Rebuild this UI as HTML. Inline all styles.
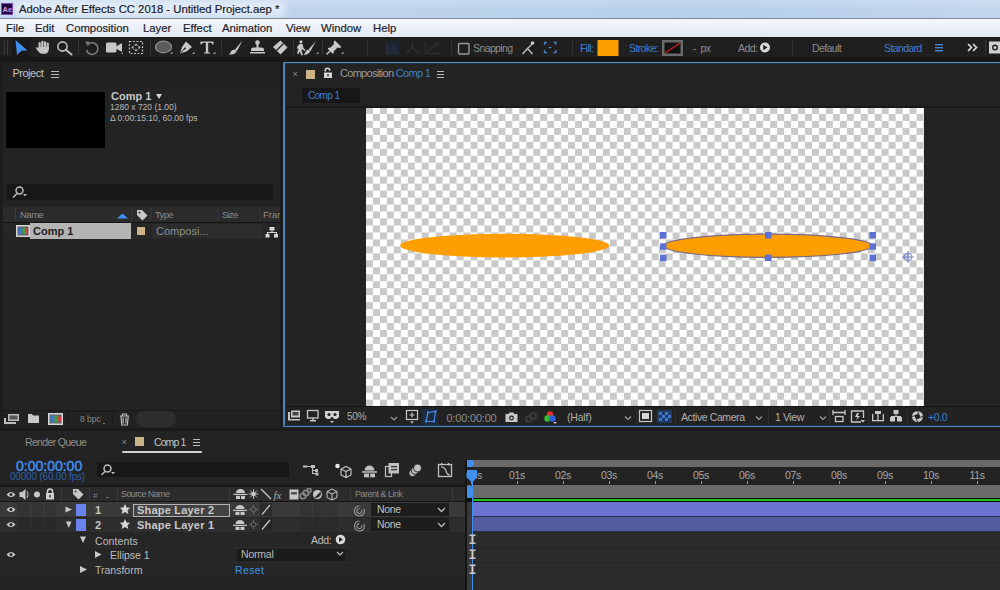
<!DOCTYPE html>
<html><head><meta charset="utf-8">
<style>
*{margin:0;padding:0;box-sizing:border-box}
html,body{width:1000px;height:590px;overflow:hidden;background:#232323;font-family:"Liberation Sans",sans-serif;position:relative}
.a{position:absolute}
.t{position:absolute;white-space:nowrap;line-height:1}
svg{position:absolute;overflow:visible}
.m{font-size:11.3px;color:#1e232b;top:22.5px;-webkit-text-stroke:0.2px #1e232b}
.tb{font-size:10.5px;top:42.5px;letter-spacing:-0.6px}
.sep{position:absolute;width:1px;background:#2e2e2e}
</style></head><body>
<!-- TITLE BAR -->
<div class="a" style="left:0;top:0;width:1000px;height:18px;background:linear-gradient(90deg,#c3d7ee 0%,#bcd3ec 50%,#b7cfea 70%,#c2d7ee 100%)"></div>
<div class="a" style="left:0;top:0;width:1000px;height:9px;background:linear-gradient(rgba(255,255,255,.18),rgba(255,255,255,0))"></div>
<div class="a" style="left:14px;top:1px;width:272px;height:16px;background:rgba(235,242,250,0.75);filter:blur(3px);border-radius:8px"></div>
<div class="a" style="left:1px;top:3px;width:12px;height:12px;background:#23063b;border:1px solid #7a4aba"></div>
<div class="t" style="left:2.5px;top:5.5px;font-size:7.5px;color:#c9a0f0;font-weight:bold">Ae</div>
<div class="t" style="left:19px;top:4px;font-size:11.3px;color:#1a2029;-webkit-text-stroke:0.2px #1a2029">Adobe After Effects CC 2018 - Untitled Project.aep *</div>
<!-- MENU -->
<div class="a" style="left:0;top:17.5px;width:1000px;height:1.2px;background:#7d8896"></div>
<div class="a" style="left:0;top:19px;width:1000px;height:18px;background:linear-gradient(#f5f7fb,#e9eef6 60%,#e3e8f1)"></div>
<div class="t m" style="left:6px">File</div>
<div class="t m" style="left:35px">Edit</div>
<div class="t m" style="left:66px">Composition</div>
<div class="t m" style="left:143px">Layer</div>
<div class="t m" style="left:183px">Effect</div>
<div class="t m" style="left:222px">Animation</div>
<div class="t m" style="left:286px">View</div>
<div class="t m" style="left:321px">Window</div>
<div class="t m" style="left:373px">Help</div>
<!-- TOOLBAR -->
<div class="a" style="left:0;top:37px;width:1000px;height:20px;background:#1f1f1f"></div>
<div class="a" style="left:0;top:57px;width:1000px;height:5px;background:#171717"></div>
<div class="a" style="left:4px;top:40px;width:1px;height:15px;background:#3a3a3a"></div>
<div class="a" style="left:7px;top:40px;width:1px;height:15px;background:#3a3a3a"></div>
<div class="a" style="left:12px;top:38px;width:18px;height:19px;background:#191919"></div>
<svg class="a" style="left:0;top:0" width="1000" height="590" viewBox="0 0 1000 590">
<g id="toolbar">
<!-- separators -->
<g fill="#333">
<rect x="78" y="40" width="1" height="15"/><rect x="150" y="40" width="1" height="15"/><rect x="221" y="40" width="1" height="15"/>
<rect x="293" y="40" width="1" height="15"/><rect x="322" y="40" width="1" height="15"/><rect x="367" y="40" width="1" height="15"/>
<rect x="451" y="40" width="1" height="15"/><rect x="572" y="40" width="1" height="15"/><rect x="792" y="40" width="1" height="15"/>
<rect x="985" y="40" width="1" height="15"/>
</g>
<!-- selection arrow -->
<path d="M15.5 40 L27.5 50.5 L21.5 50.8 L17 55 Z" fill="#3f8ff0"/>
<!-- hand -->
<g fill="#c4c4c4">
<rect x="38.5" y="42" width="2.2" height="7" rx="1.1"/><rect x="41.2" y="40.8" width="2.2" height="8" rx="1.1"/>
<rect x="43.9" y="41.2" width="2.2" height="8" rx="1.1"/><rect x="46.6" y="42.5" width="2.2" height="7" rx="1.1"/>
<path d="M38.5 47 L48.8 47 L48.8 50 Q48 53.5 45 53.8 L42 53.8 Q39.5 53.5 37.5 50.5 L35.6 47.8 Q36.2 46.8 37.4 47.6 L38.5 48.8Z"/>
</g>
<!-- zoom -->
<circle cx="62.5" cy="46.5" r="4.6" fill="none" stroke="#bdbdbd" stroke-width="1.6"/>
<path d="M65.8 49.8 L71.5 54.5" stroke="#bdbdbd" stroke-width="2" stroke-linecap="round"/>
<!-- rotate -->
<path d="M88 44.5 A5.8 5.8 0 1 1 86.5 50" fill="none" stroke="#7a7a7a" stroke-width="1.6"/>
<path d="M85 41.5 L89.5 41.8 L88 46.5Z" fill="#7a7a7a"/>
<!-- camera -->
<rect x="106" y="42.5" width="10.5" height="10" rx="1.5" fill="#c8c8c8"/>
<path d="M116 46.5 L122 43 L122 52 L116 48.5Z" fill="#c8c8c8"/>
<path d="M121 54 l2 0 l0 -2z" fill="#999"/>
<!-- pan behind -->
<g stroke="#c0c0c0" stroke-width="1.2" fill="none" stroke-dasharray="2 1.5">
<rect x="129.5" y="41.5" width="13" height="12"/>
</g>
<g fill="#c8c8c8"><path d="M136 43.5 l-2 2 h4z M136 51.5 l-2 -2 h4z M131.5 47.5 l2 -2 v4z M140.5 47.5 l-2 -2 v4z"/></g>
<!-- ellipse tool -->
<ellipse cx="163.5" cy="47" rx="8" ry="5.8" fill="#5a5a5a" stroke="#8c8c8c" stroke-width="1.2"/>
<path d="M170 54 l2.5 0 l0 -2.5z" fill="#999"/>
<!-- pen -->
<path d="M186 41.5 L192 47 L186.5 51.5 L180 53.5 L182 47 Z" fill="#c8c8c8"/>
<path d="M180.5 53 L184.5 48.5" stroke="#1f1f1f" stroke-width="1"/>
<circle cx="184.8" cy="48.5" r="1" fill="#1f1f1f"/>
<path d="M192 54 l2.5 0 l0 -2.5z" fill="#999"/>
<!-- T -->
<path d="M200.5 41.5 H213.5 V44.5 H212.5 Q212 42.8 210.5 42.8 H208.2 V52.5 H210 V53.5 H204 V52.5 H205.8 V42.8 H203.5 Q202 42.8 201.5 44.5 H200.5Z" fill="#c8c8c8"/>
<path d="M213 54 l2.5 0 l0 -2.5z" fill="#999"/>
<!-- brush -->
<path d="M242.5 40.5 L235 49.5 L237 51 Z" fill="#c8c8c8"/>
<path d="M234.5 49.5 Q231 50 230.5 52.5 Q230 54 228.5 54.5 Q233 55 235.5 53 Q237 51.5 236.5 51Z" fill="#c8c8c8"/>
<!-- stamp -->
<g fill="#c8c8c8">
<circle cx="257.5" cy="42.5" r="2.3"/><rect x="256.5" y="43" width="2" height="5"/>
<path d="M251 49.5 Q251 47.5 253.5 47.5 H261.5 Q264 47.5 264 49.5 V51 H251Z"/>
<rect x="250" y="52" width="15" height="1.5"/>
</g>
<!-- eraser -->
<path d="M280.5 40.5 L287.5 47.5 L280.5 54.5 L273 47Z" fill="#c8c8c8"/>
<path d="M276.5 50.5 L283.5 43.5" stroke="#1f1f1f" stroke-width="1.2"/>
<!-- roto brush -->
<g fill="#c8c8c8">
<circle cx="301" cy="41.8" r="1.6"/>
<path d="M299.5 44 L302.5 44 L303.5 48 L305.5 50 L304.5 51 L302 49 L301.5 51 L303 55 L301.5 55.5 L299.5 51.5 L298.5 54 L297 53.5 L298.5 48.5 L297.5 49 L297 47Z"/>
<path d="M316 41 L308.5 49.5 L310.5 51Z"/>
<path d="M308 49.5 Q305.5 50.5 305 53 Q304.5 54.5 303.5 55 Q307 55 309 53 Q310.5 51.5 310 51Z"/>
</g>
<path d="M316 54 l2.5 0 l0 -2.5z" fill="#999"/>
<!-- puppet pin -->
<g fill="#c8c8c8">
<path d="M335 40.5 L341.5 47 L339.5 48 L337.5 47.5 L334 51 L333.5 53.5 L332.5 53.5 L328 49 L328 48 L330.5 47.5 L334 44 L333.5 42Z"/>
<path d="M330.5 50.5 L326.5 54.5" stroke="#c8c8c8" stroke-width="1.4"/>
</g>
<path d="M341 54 l2.5 0 l0 -2.5z" fill="#999"/>
<!-- dim align icons -->
<rect x="385" y="41" width="15" height="14" fill="#1c2330"/>
<g stroke="#2c3646" stroke-width="1.2" fill="none">
<path d="M387 43 V53 H398 M390 45 V51 M393 45 V51 M396 45 V51"/>
</g>
<g stroke="#303030" stroke-width="1.2" fill="none">
<path d="M412.5 42 V47 L406.5 53.5 M412.5 47 L418.5 53.5 M406.5 53.5 H408 M417 53.5 H418.5"/>
<path d="M425.5 42 V53.5 H440 M427 52 L438 43 M434 43 H438 V47"/>
</g>
<!-- snapping checkbox -->
<rect x="458.5" y="43.5" width="10.5" height="10.5" rx="1" fill="none" stroke="#9a9a9a" stroke-width="1.4"/>
<!-- snapping icon -->
<path d="M522.5 54 L527.5 48.5 L532.5 54" fill="none" stroke="#bdbdbd" stroke-width="1.5"/>
<path d="M527 49 L532 44" stroke="#bdbdbd" stroke-width="1.2"/>
<circle cx="532.5" cy="43" r="1.8" fill="#d0d0d0"/>
<!-- blue dashed box -->
<g fill="none" stroke="#4a7fc0" stroke-width="1.3">
<path d="M544.5 45 V42.5 H547 M553.5 42.5 H556 V45 M556 50 V52.5 H553.5 M547 52.5 H544.5 V50"/>
<path d="M548.5 47.5 h3" />
</g>
<!-- fill swatch -->
<rect x="597.5" y="40" width="21" height="16" fill="#ff9e00"/>
<!-- stroke swatch -->
<rect x="662" y="40" width="21" height="16" fill="#6a6a6a"/>
<rect x="664.5" y="42.5" width="16" height="11" fill="#111"/>
<path d="M665 53 L680 43" stroke="#d02020" stroke-width="1.3"/>
<!-- add circle -->
<circle cx="765" cy="47.5" r="5" fill="#d8d8d8"/>
<path d="M763.2 44.8 L767.5 47.5 L763.2 50.2Z" fill="#1f1f1f"/>
<!-- hamburger blue -->
<g fill="#4a86d0"><rect x="935" y="44" width="8" height="1.4"/><rect x="935" y="47" width="8" height="1.4"/><rect x="935" y="50" width="8" height="1.4"/></g>
<!-- >> -->
<path d="M968 44 L971.5 47.5 L968 51 M973 44 L976.5 47.5 L973 51" fill="none" stroke="#e0e0e0" stroke-width="1.6"/>
<!-- right icon -->
<rect x="989" y="41.5" width="12" height="12" fill="#cfcfcf"/>
<circle cx="995" cy="47.5" r="3" fill="#1f1f1f"/><circle cx="995" cy="47.5" r="1.6" fill="#cfcfcf"/>
</g>
</svg>
<div class="t tb" style="left:473px;color:#8c8c8c">Snapping</div>
<div class="t tb" style="left:580px;color:#3f7fcf">Fill:</div>
<div class="t tb" style="left:629px;color:#3f7fcf">Stroke:</div>
<div class="t tb" style="left:693px;color:#8c8c8c">-&nbsp;&nbsp;px</div>
<div class="t tb" style="left:738px;color:#8c8c8c">Add:</div>
<div class="t tb" style="left:812px;color:#8c8c8c">Default</div>
<div class="t tb" style="left:884px;color:#3f7fcf">Standard</div>


<!-- PROJECT PANEL -->
<div class="a" style="left:0;top:62px;width:280px;height:366px;background:#232323"></div>
<div class="a" style="left:0;top:62px;width:3px;height:366px;background:#1d1d1d"></div>
<div class="a" style="left:3px;top:62px;width:277px;height:26px;background:#222"></div>
<div class="t" style="left:12.5px;top:68px;font-size:11px;color:#c4c4c4;letter-spacing:-0.5px">Project</div>
<div class="a" style="left:51px;top:71px;width:8px;height:1.3px;background:#bbb"></div>
<div class="a" style="left:51px;top:74px;width:8px;height:1.3px;background:#bbb"></div>
<div class="a" style="left:51px;top:77px;width:8px;height:1.3px;background:#bbb"></div>
<div class="a" style="left:6px;top:92px;width:99px;height:56px;background:#000"></div>
<div class="t" style="left:111px;top:91px;font-size:11px;color:#c8c8c8;font-weight:bold">Comp 1</div>
<div class="a" style="left:156px;top:94px;width:0;height:0;border-left:3.5px solid transparent;border-right:3.5px solid transparent;border-top:5px solid #d8d8d8"></div>
<div class="t" style="left:110px;top:103px;font-size:8.5px;color:#b8b8b8">1280 x 720 (1.00)</div>
<div class="t" style="left:110px;top:114px;font-size:8.5px;color:#b8b8b8">Δ 0:00:15:10, 60.00 fps</div>
<!-- search -->
<div class="a" style="left:7px;top:184px;width:266px;height:16px;background:#181818"></div>
<!-- header -->
<div class="a" style="left:3px;top:207px;width:277px;height:15px;background:#2b2b2b"></div>
<div class="a" style="left:3px;top:222px;width:277px;height:1px;background:#141414"></div>
<div class="t" style="left:20px;top:209.5px;font-size:9.5px;color:#8a8a8a;letter-spacing:-0.5px">Name</div>
<div class="t" style="left:155px;top:209.5px;font-size:9.5px;color:#8a8a8a;letter-spacing:-0.7px">Type</div>
<div class="t" style="left:222px;top:209.5px;font-size:9.5px;color:#8a8a8a;letter-spacing:-0.7px">Size</div>
<div class="t" style="left:263px;top:209.5px;font-size:9.5px;color:#8a8a8a">Fran</div>
<!-- row -->
<div class="a" style="left:3px;top:223px;width:277px;height:16px;background:#262626"></div>
<div class="a" style="left:30px;top:223px;width:101px;height:16px;background:#b4b4b4"></div>
<div class="a" style="left:152px;top:224px;width:111px;height:14px;background:#2c2c2c"></div>
<div class="t" style="left:33px;top:226px;font-size:11px;color:#1e1e1e;font-weight:bold">Comp 1</div>
<div class="t" style="left:156px;top:226px;font-size:11px;color:#8c8c8c">Composi...</div>
<div class="a" style="left:137px;top:227px;width:8px;height:8px;background:#c9b387"></div>
<!-- bottom bar -->
<div class="a" style="left:3px;top:410px;width:277px;height:18px;background:#222"></div>
<div class="a" style="left:3px;top:410px;width:277px;height:1px;background:#1a1a1a"></div>
<div class="t" style="left:80px;top:415px;font-size:8.5px;color:#8a8a8a">8 bpc</div>
<div class="a" style="left:136px;top:411px;width:40px;height:16px;border-radius:8px;background:#2e2e2e"></div>
<!-- COMP PANEL -->
<div class="a" style="left:280px;top:62px;width:3px;height:369px;background:#1a1a1a"></div>
<div class="a" style="left:283px;top:62px;width:717px;height:366px;background:#232323"></div>
<div class="t" style="left:292.5px;top:70px;font-size:9px;color:#8a8a8a">×</div>
<div class="a" style="left:306px;top:69.5px;width:9px;height:9px;background:#c9b387"></div>
<div class="t" style="left:340px;top:68px;font-size:11px;color:#9a9a9a;letter-spacing:-0.7px">Composition <span style="color:#3f7fcf">Comp 1</span></div>
<div class="a" style="left:437px;top:71px;width:7px;height:1.3px;background:#bbb"></div>
<div class="a" style="left:437px;top:74px;width:7px;height:1.3px;background:#bbb"></div>
<div class="a" style="left:437px;top:77px;width:7px;height:1.3px;background:#bbb"></div>
<div class="a" style="left:302px;top:88px;width:58px;height:15px;background:#171717"></div>
<div class="t" style="left:308px;top:90.5px;font-size:10px;color:#3f7fcf;letter-spacing:-0.6px">Comp 1</div>
<div class="a" style="left:285px;top:106px;width:715px;height:2px;background:#181818"></div>
<div class="a" style="left:285px;top:108px;width:715px;height:298px;background:#232323"></div>
<div class="a" style="left:366px;top:108px;width:558px;height:298px;background:conic-gradient(#fff 25%,#c9c9c9 0 50%,#fff 0 75%,#c9c9c9 0) 0 -1px/13.95px 13.95px"></div>
<div class="a" style="left:285px;top:406px;width:715px;height:1px;background:#141414"></div>
<div class="a" style="left:285px;top:407px;width:715px;height:19px;background:#222"></div>
<div class="t" style="left:347px;top:412px;font-size:10px;color:#b0b0b0;letter-spacing:-0.3px">50%</div>
<div class="t" style="left:446.5px;top:413px;font-size:11px;color:#8c8c8c;letter-spacing:-0.2px">0:00:00:00</div>
<div class="t" style="left:567px;top:411.5px;font-size:10.5px;color:#b0b0b0;letter-spacing:-0.2px">(Half)</div>
<div class="t" style="left:681px;top:411.5px;font-size:10.5px;color:#b0b0b0;letter-spacing:-0.4px">Active Camera</div>
<div class="t" style="left:775px;top:411.5px;font-size:10.5px;color:#b0b0b0;letter-spacing:-0.4px">1 View</div>
<div class="t" style="left:928px;top:411.5px;font-size:10.5px;color:#3f7fcf;letter-spacing:-0.4px">+0.0</div>

<div class="a" style="left:283px;top:61.5px;width:717px;height:1.5px;background:#5f8cbc"></div>
<div class="a" style="left:284px;top:63px;width:716px;height:1px;background:#1b3550"></div>
<div class="a" style="left:283px;top:62px;width:1.5px;height:365px;background:#5082b4"></div>
<div class="a" style="left:284.5px;top:63px;width:1px;height:363px;background:#1b3550"></div>
<div class="a" style="left:283px;top:425.5px;width:717px;height:1.5px;background:#4f84ba"></div>
<div class="a" style="left:284px;top:424.5px;width:716px;height:1px;background:#1b3550"></div>
<!-- TIMELINE -->
<div class="a" style="left:0;top:428px;width:1000px;height:3px;background:#1a1a1a"></div>
<div class="a" style="left:0;top:431px;width:1000px;height:159px;background:#232323"></div>
<div class="t" style="left:25px;top:437px;font-size:10.5px;color:#8f8f8f;letter-spacing:-0.65px">Render Queue</div>
<div class="t" style="left:121.5px;top:438px;font-size:9px;color:#8a8a8a">×</div>
<div class="a" style="left:135px;top:437px;width:9px;height:9px;background:#c9b387"></div>
<div class="t" style="left:154px;top:437px;font-size:10.5px;color:#c4c4c4;letter-spacing:-0.9px">Comp 1</div>
<div class="a" style="left:193px;top:439px;width:7px;height:1.3px;background:#bbb"></div>
<div class="a" style="left:193px;top:442px;width:7px;height:1.3px;background:#bbb"></div>
<div class="a" style="left:193px;top:445px;width:7px;height:1.3px;background:#bbb"></div>
<div class="a" style="left:122px;top:451px;width:80px;height:2px;background:#d0d0d0;border-radius:1px"></div>
<div class="t" style="left:16px;top:459px;font-size:14px;color:#3f8ff0;letter-spacing:0px;-webkit-text-stroke:0.45px #3f8ff0">0:00:00:00</div>
<div class="t" style="left:10px;top:472px;font-size:10px;color:#2a5fa8;letter-spacing:-0.2px">00000 (60.00 fps)</div>
<div class="a" style="left:97px;top:462px;width:192px;height:15px;background:#171717"></div>
<!-- header row -->
<div class="a" style="left:0;top:485px;width:466px;height:1.5px;background:#181818"></div><div class="a" style="left:0;top:486.5px;width:466px;height:14.5px;background:#2b2b2b"></div>
<div class="a" style="left:0;top:501px;width:466px;height:1px;background:#151515"></div>
<div class="t" style="left:121px;top:489.5px;font-size:9px;color:#8a8a8a;letter-spacing:-0.6px">Source Name</div>
<div class="t" style="left:355px;top:489.5px;font-size:9px;color:#8a8a8a;letter-spacing:-0.5px">Parent &amp; Link</div>
<!-- rows -->
<div class="a" style="left:0;top:502px;width:466px;height:15px;background:#3a3a3a"></div>
<div class="a" style="left:0;top:517px;width:466px;height:15px;background:#2e2e2e"></div>
<div class="a" style="left:0;top:516.5px;width:466px;height:1px;background:#262626"></div>
<div class="a" style="left:0;top:532px;width:466px;height:45px;background:#262626"></div>
<div class="a" style="left:0;top:546.5px;width:466px;height:1px;background:#2b2b2b"></div>
<div class="a" style="left:0;top:561.5px;width:466px;height:1px;background:#2b2b2b"></div>
<div class="a" style="left:0;top:577px;width:466px;height:13px;background:#232323"></div>
<div class="a" style="left:133px;top:503.5px;width:97px;height:13px;border:1.5px solid #b4b4b4;background:#434343"></div>
<div class="t" style="left:95px;top:505px;font-size:11px;color:#c8c8c8;font-weight:bold">1</div>
<div class="t" style="left:95px;top:520px;font-size:11px;color:#c8c8c8;font-weight:bold">2</div>
<div class="t" style="left:137px;top:504.8px;font-size:11px;color:#c8c8c8;font-weight:bold;letter-spacing:0.2px">Shape Layer 2</div>
<div class="t" style="left:137px;top:520.2px;font-size:11px;color:#c8c8c8;font-weight:bold;letter-spacing:0.2px">Shape Layer 1</div>
<div class="t" style="left:95px;top:535.5px;font-size:10.5px;color:#bcbcbc;letter-spacing:0.1px">Contents</div>
<div class="t" style="left:110px;top:550px;font-size:10.5px;color:#bcbcbc;letter-spacing:0px">Ellipse 1</div>
<div class="t" style="left:95px;top:564.5px;font-size:10.5px;color:#bcbcbc;letter-spacing:0px">Transform</div>
<div class="t" style="left:311px;top:535px;font-size:10.5px;color:#bcbcbc;letter-spacing:-0.3px">Add:</div>
<div class="a" style="left:237px;top:548.5px;width:108px;height:12px;background:#1b1b1b"></div>
<div class="t" style="left:241px;top:548.5px;font-size:10.5px;color:#bcbcbc;letter-spacing:-0.2px">Normal</div>
<div class="t" style="left:235px;top:564.5px;font-size:10.5px;color:#3f8ff0;letter-spacing:0.4px">Reset</div>
<div class="a" style="left:371px;top:503px;width:78px;height:13px;background:#1d1d1d"></div>
<div class="a" style="left:371px;top:518px;width:78px;height:13px;background:#1d1d1d"></div>
<div class="t" style="left:377px;top:504px;font-size:10.5px;color:#c0c0c0;letter-spacing:-0.3px">None</div>
<div class="t" style="left:377px;top:519px;font-size:10.5px;color:#c0c0c0;letter-spacing:-0.3px">None</div>
<!-- timeline right -->
<div class="a" style="left:465px;top:460px;width:2px;height:130px;background:#141414"></div>
<div class="a" style="left:467px;top:460px;width:533px;height:130px;background:#262626"></div>
<div class="a" style="left:467px;top:460px;width:533px;height:7px;background:#6a6a6a"></div>
<div class="a" style="left:467px;top:467px;width:533px;height:18px;background:#232323"></div>
<div class="a" style="left:467px;top:485px;width:533px;height:13px;background:#6b6b6b"></div>
<div class="a" style="left:467px;top:498px;width:533px;height:4px;background:#0c0c0c"></div>
<div class="a" style="left:472px;top:499px;width:528px;height:2px;background:#20c020"></div>
<div class="a" style="left:472px;top:502px;width:528px;height:15px;background:#6c74d2"></div>
<div class="a" style="left:472px;top:517px;width:528px;height:15px;background:#535c9c"></div>
<div class="a" style="left:472px;top:516px;width:528px;height:1px;background:#2a2e50"></div>
<div class="a" style="left:472px;top:531px;width:528px;height:1px;background:#2a2e50"></div>
<div class="a" style="left:467px;top:532px;width:533px;height:45px;background:#2b2b2b"></div>
<div class="a" style="left:467px;top:546.5px;width:533px;height:1px;background:#242424"></div>
<div class="a" style="left:467px;top:561.5px;width:533px;height:1px;background:#242424"></div>
<div class="a" style="left:467px;top:576.5px;width:533px;height:1px;background:#242424"></div>
<div class="a" style="left:467px;top:577px;width:533px;height:13px;background:#2b2b2b"></div>
<div class="a" style="left:467px;top:502px;width:5px;height:88px;background:#393939"></div>
<div class="t" style="left:466px;top:470px;font-size:10.5px;color:#a8a8a8;letter-spacing:-0.3px">00s</div>
<div class="a" style="left:471px;top:481px;width:1px;height:3px;background:#999"></div>
<div class="t" style="left:502px;width:30px;text-align:center;top:470px;font-size:10.5px;color:#a8a8a8;letter-spacing:-0.3px">01s</div>
<div class="a" style="left:517px;top:481px;width:1px;height:3px;background:#999"></div>
<div class="t" style="left:548px;width:30px;text-align:center;top:470px;font-size:10.5px;color:#a8a8a8;letter-spacing:-0.3px">02s</div>
<div class="a" style="left:563px;top:481px;width:1px;height:3px;background:#999"></div>
<div class="t" style="left:594px;width:30px;text-align:center;top:470px;font-size:10.5px;color:#a8a8a8;letter-spacing:-0.3px">03s</div>
<div class="a" style="left:609px;top:481px;width:1px;height:3px;background:#999"></div>
<div class="t" style="left:640px;width:30px;text-align:center;top:470px;font-size:10.5px;color:#a8a8a8;letter-spacing:-0.3px">04s</div>
<div class="a" style="left:655px;top:481px;width:1px;height:3px;background:#999"></div>
<div class="t" style="left:686px;width:30px;text-align:center;top:470px;font-size:10.5px;color:#a8a8a8;letter-spacing:-0.3px">05s</div>
<div class="a" style="left:701px;top:481px;width:1px;height:3px;background:#999"></div>
<div class="t" style="left:732px;width:30px;text-align:center;top:470px;font-size:10.5px;color:#a8a8a8;letter-spacing:-0.3px">06s</div>
<div class="a" style="left:747px;top:481px;width:1px;height:3px;background:#999"></div>
<div class="t" style="left:778px;width:30px;text-align:center;top:470px;font-size:10.5px;color:#a8a8a8;letter-spacing:-0.3px">07s</div>
<div class="a" style="left:793px;top:481px;width:1px;height:3px;background:#999"></div>
<div class="t" style="left:824px;width:30px;text-align:center;top:470px;font-size:10.5px;color:#a8a8a8;letter-spacing:-0.3px">08s</div>
<div class="a" style="left:839px;top:481px;width:1px;height:3px;background:#999"></div>
<div class="t" style="left:870px;width:30px;text-align:center;top:470px;font-size:10.5px;color:#a8a8a8;letter-spacing:-0.3px">09s</div>
<div class="a" style="left:885px;top:481px;width:1px;height:3px;background:#999"></div>
<div class="t" style="left:916px;width:30px;text-align:center;top:470px;font-size:10.5px;color:#a8a8a8;letter-spacing:-0.3px">10s</div>
<div class="a" style="left:931px;top:481px;width:1px;height:3px;background:#999"></div>
<div class="t" style="left:962px;width:30px;text-align:center;top:470px;font-size:10.5px;color:#a8a8a8;letter-spacing:-0.3px">11s</div>
<div class="a" style="left:977px;top:481px;width:1px;height:3px;background:#999"></div>
<div class="a" style="left:471.5px;top:470px;width:1.5px;height:120px;background:#3f8ff0"></div>
<svg class="a" style="left:0;top:0" width="1000" height="590" viewBox="0 0 1000 590">
<!-- ===== project panel ===== -->
<g fill="none" stroke="#bdbdbd" stroke-width="1.5"><circle cx="19.5" cy="190.5" r="3.5"/><path d="M17 193.5 L13 197.5"/></g>
<path d="M23 194 h4 l-2 2.2z" fill="#bdbdbd"/>
<g fill="#3a3a3a"><rect x="15" y="208" width="1" height="13"/><rect x="131.5" y="208" width="1" height="13"/><rect x="150.5" y="208" width="1" height="13"/><rect x="217.5" y="208" width="1" height="13"/><rect x="259.5" y="208" width="1" height="13"/></g>
<path d="M117 218.5 L122.5 213.5 L128 218.5Z" fill="#3f8ff0"/>
<path d="M137 210 H142 L147.5 215.5 L142.5 220.5 L137 215Z" fill="#c8c8c8"/><circle cx="139.5" cy="212.5" r="1" fill="#2b2b2b"/>
<!-- comp icon in row -->
<rect x="16" y="225" width="14" height="12" fill="#d8d8d8"/>
<rect x="17.5" y="226.5" width="11" height="9" fill="#6a5a60"/>
<rect x="18.5" y="227.5" width="4" height="7" fill="#3a7ad0"/><rect x="22.5" y="227.5" width="3.5" height="7" fill="#40a040"/><rect x="25.5" y="228.5" width="2.5" height="5" fill="#d04040"/>
<!-- network icon -->
<g fill="#d8d8d8"><rect x="269.5" y="227" width="5" height="3.5"/><rect x="271.5" y="230" width="1" height="2.5"/><rect x="267" y="232" width="10" height="1"/><rect x="267" y="232" width="1" height="2"/><rect x="276" y="232" width="1" height="2"/><rect x="265.5" y="234" width="4" height="3.5"/><rect x="274" y="234" width="4" height="3.5"/></g>
<!-- project bottom icons -->
<g fill="#bcbcbc">
<rect x="8" y="414" width="11" height="7"/><rect x="4" y="418" width="2" height="6"/><rect x="4" y="422" width="12" height="2"/>
</g>
<rect x="9.5" y="415.5" width="8" height="4" fill="#555"/>
<path d="M28 414 h4 l1 1.5 h6 v7.5 h-11z" fill="#c8c8c8"/>
<rect x="48" y="413" width="15" height="12" fill="#d8d8d8"/><rect x="49.5" y="414.5" width="12" height="9" fill="#6a5a60"/>
<rect x="50.5" y="415.5" width="4" height="7" fill="#3a7ad0"/><rect x="54.5" y="415.5" width="4" height="7" fill="#40a040"/><rect x="58" y="416.5" width="3" height="5" fill="#d04040"/>
<rect x="68.5" y="411.5" width="44" height="15" fill="none" stroke="#1a1a1a" stroke-width="1"/>
<path d="M103 423 h2 v1 h-2z" fill="#777"/>
<g fill="none" stroke="#bcbcbc" stroke-width="1.2"><path d="M120 416 h9 M121 416 l0.8 9 h5.6 l0.8 -9 M123.2 417.5 v6 M126 417.5 v6"/><path d="M122.5 416 v-2 h4 v2"/></g>

<!-- ===== comp panel header ===== -->
<g fill="#d8d8d8"><path d="M324.5 71.5 v-1 a3 3 0 0 1 6 0 v0.3 h-1.6 v-0.3 a1.4 1.4 0 0 0 -2.8 0 v1z"/><rect x="324" y="72.5" width="8" height="5.5"/></g>
<rect x="327.3" y="74.2" width="1.4" height="2" fill="#232323"/>
<!-- ===== canvas ===== -->
<ellipse cx="504.7" cy="245.6" rx="104.5" ry="11.8" fill="#ff9e00"/>
<ellipse cx="768" cy="245.8" rx="104" ry="11.6" fill="#ff9e00" stroke="#7a6a88" stroke-width="1.2"/>
<g fill="#5d70d6">
<rect x="660" y="232" width="6.5" height="6.5"/><rect x="765" y="232" width="6.5" height="6.5"/><rect x="869.5" y="232" width="6.5" height="6.5"/>
<rect x="660" y="243.3" width="6.5" height="6.5"/><rect x="869.5" y="243.3" width="6.5" height="6.5"/>
<rect x="660" y="254.6" width="6.5" height="6.5"/><rect x="765" y="254.6" width="6.5" height="6.5"/><rect x="869.5" y="254.6" width="6.5" height="6.5"/>
</g>
<g fill="none" stroke="#7b86c8" stroke-width="1.1"><circle cx="908" cy="257" r="3.8"/><path d="M902 257 h12 M908 251 v12"/></g>
<!-- ===== comp bottom bar ===== -->
<g fill="#c8c8c8">
<rect x="291" y="410.5" width="9" height="7"/><rect x="288" y="412" width="2" height="8"/><rect x="288" y="419" width="12" height="1.5"/>
</g>
<rect x="292.5" y="412" width="6" height="3.5" fill="#444"/>
<g fill="none" stroke="#c8c8c8" stroke-width="1.3"><rect x="307.5" y="410.5" width="10.5" height="7.5"/></g>
<rect x="310" y="420" width="6" height="1.5" fill="#c8c8c8"/><rect x="312.3" y="418" width="1.4" height="2.5" fill="#c8c8c8"/>
<path d="M325 411 h14 v6 q-1 2 -3 2 h-2 l-1.5 -2 h-1 l-1.5 2 h-2 q-2 0 -3 -2z" fill="#d0d0d0"/>
<circle cx="329" cy="414.5" r="1.6" fill="#222"/><circle cx="335" cy="414.5" r="1.6" fill="#222"/>
<path d="M330 421 h4 l-2 2z" fill="#d0d0d0"/>
<path d="M391 417 l3 3 l3 -3" fill="none" stroke="#9a9a9a" stroke-width="1.2"/>

<g fill="none" stroke="#c8c8c8" stroke-width="1.2"><rect x="406.5" y="410.5" width="11" height="9"/><path d="M412 412.5 v5 M409.5 415 h5"/></g>
<path d="M410 421.5 h4 l-2 2z" fill="#c8c8c8"/>
<rect x="422" y="409" width="16" height="16" fill="#1b2a3e"/>
<path d="M426 421.5 L428 412.5 L435.5 411.5 L434 421.5 Z" fill="none" stroke="#4a8ae0" stroke-width="1.2"/>
<g fill="#4a8ae0"><rect x="425" y="420.5" width="2" height="2"/><rect x="427" y="411.5" width="2" height="2"/><rect x="434.5" y="410.5" width="2" height="2"/><rect x="433" y="420.5" width="2" height="2"/></g>
<g fill="#c8c8c8"><path d="M505.5 414 h3 l1 -1.5 h4 l1 1.5 h3 v8 h-12z"/></g>
<circle cx="511.5" cy="418" r="2.4" fill="#222"/><circle cx="511.5" cy="418" r="1.2" fill="#c8c8c8"/>
<g fill="none" stroke="#3a3a3a" stroke-width="2"><circle cx="529" cy="419" r="3"/><circle cx="533" cy="416" r="3"/></g>
<circle cx="550" cy="414.5" r="3.2" fill="#e03030"/><circle cx="547.5" cy="418.5" r="3.2" fill="#30c030"/><circle cx="552.5" cy="418.5" r="3.2" fill="#3060e0"/>
<path d="M553 422 h4 l-2 2z" fill="#c8c8c8"/>
<path d="M625 416.5 l3 3 l3 -3" fill="none" stroke="#9a9a9a" stroke-width="1.2"/>
<rect x="636" y="409" width="1" height="16" fill="#2e2e2e"/>
<rect x="639.5" y="410.5" width="12" height="11" fill="none" stroke="#c8c8c8" stroke-width="1.2"/>
<rect x="642" y="413" width="7" height="6" fill="#d8d8d8"/>
<rect x="657" y="410" width="15" height="13" fill="#1d3a66"/>
<g fill="#3f78c8"><rect x="659" y="412" width="3" height="3"/><rect x="665" y="412" width="3" height="3"/><rect x="662" y="415" width="3" height="3"/><rect x="668" y="415" width="3" height="3"/><rect x="659" y="418" width="3" height="3"/><rect x="665" y="418" width="3" height="3"/></g>
<rect x="675" y="409" width="1" height="16" fill="#2e2e2e"/>
<path d="M756 416.5 l3 3 l3 -3" fill="none" stroke="#9a9a9a" stroke-width="1.2"/>
<rect x="768" y="409" width="1" height="16" fill="#2e2e2e"/>
<path d="M820 416.5 l3 3 l3 -3" fill="none" stroke="#9a9a9a" stroke-width="1.2"/>
<rect x="829" y="409" width="1" height="16" fill="#2e2e2e"/>
<g fill="none" stroke="#c8c8c8" stroke-width="1.3"><path d="M833 412.5 h12 M833 410 v5 M845 410 v5"/><rect x="835.5" y="416.5" width="7.5" height="5"/></g>
<g fill="none" stroke="#c8c8c8" stroke-width="1.3"><path d="M861 422 h-9.5 v-11 h12 v7"/></g>
<path d="M857 413 l-2 4 h2.5 l-1.5 3.5 l4 -4.5 h-2.5 l1.5 -3z" fill="#d0d0d0"/>
<path d="M860.5 420 h4.5 l-2.2 2.5z" fill="#c8c8c8"/>
<rect x="868" y="409" width="1" height="16" fill="#2e2e2e"/>
<g fill="#c8c8c8"><rect x="872" y="420" width="12" height="1.3"/><rect x="872" y="414" width="1.3" height="6"/><rect x="877.3" y="412" width="1.3" height="8"/><rect x="882.7" y="414" width="1.3" height="6"/><rect x="875" y="411" width="6" height="3"/></g>
<g fill="#c8c8c8"><rect x="893.5" y="410" width="5" height="4"/><rect x="895.5" y="414" width="1" height="2"/><rect x="891" y="416" width="10" height="1"/><rect x="890" y="417" width="5" height="4.5"/><rect x="897" y="417" width="5" height="4.5"/></g>
<rect x="907" y="409" width="1" height="16" fill="#2e2e2e"/>
<circle cx="917.5" cy="416.5" r="5.5" fill="#c8c8c8"/><circle cx="917.5" cy="416.5" r="2.5" fill="#222"/>
<g stroke="#222" stroke-width="0.9"><path d="M917.5 411 l1.5 3.5 M923 416.5 l-3.5 1 M917.5 422 l-1.5 -3.5 M912 416.5 l3.5 -1"/></g>

<!-- ===== timeline ===== -->
<g fill="none" stroke="#bdbdbd" stroke-width="1.5"><circle cx="107.5" cy="468.5" r="3.5"/><path d="M105 471.5 L101.5 475"/></g>
<path d="M111 472 h4 l-2 2.2z" fill="#bdbdbd"/>
<!-- timeline top icons -->
<g fill="#c0c0c0"><rect x="303" y="465.5" width="4" height="2"/><rect x="307" y="466" width="5" height="1"/><rect x="311" y="465" width="4" height="3"/><rect x="312" y="468" width="1" height="6"/><rect x="313" y="470" width="3" height="1"/><rect x="315" y="469" width="3" height="3"/><rect x="313" y="473" width="3" height="1"/><rect x="315.5" y="472.5" width="3" height="3"/></g>
<path d="M341 469 l5 -2.5 l5 2.5 v6 l-5 2.5 l-5 -2.5z M341 469 l5 2.5 l5 -2.5 M346 471.5 v6" fill="none" stroke="#c0c0c0" stroke-width="1.2"/>
<circle cx="337.5" cy="466" r="2.3" fill="#e8e8e8"/>
<path d="M364.5 470.5 a5 5 0 0 1 10 0z" fill="#c0c0c0"/><rect x="362" y="471.2" width="15" height="1.5" fill="#c0c0c0"/><rect x="364" y="473.5" width="11" height="3.8" fill="#c0c0c0"/><rect x="369" y="473.5" width="1.2" height="3.8" fill="#232323"/>
<rect x="385.5" y="466.5" width="6" height="10" fill="none" stroke="#c0c0c0" stroke-width="1.2"/>
<rect x="388.5" y="463" width="10.5" height="10.5" fill="#c0c0c0"/><rect x="391" y="466" width="6" height="1.3" fill="#333"/><rect x="391" y="469" width="6" height="1.3" fill="#333"/>
<g fill="#c0c0c0" stroke="#232323" stroke-width="0.9"><circle cx="412.5" cy="473" r="3.6"/><circle cx="415" cy="470.5" r="3.8"/><circle cx="417.5" cy="468" r="4"/></g>
<rect x="438.5" y="464.5" width="13" height="12" fill="none" stroke="#c0c0c0" stroke-width="1.3"/>
<path d="M441 467 q4 0 5 4 q1 4 4 4" fill="none" stroke="#c0c0c0" stroke-width="1.2"/>
<rect x="441" y="463" width="1.3" height="2.5" fill="#c0c0c0"/><rect x="448" y="463" width="1.3" height="2.5" fill="#c0c0c0"/>
<!-- header icons -->
<g fill="#d0d0d0">
<path d="M6.5 494.5 Q11 489.5 15.5 494.5 Q11 499.5 6.5 494.5Z"/>
</g>
<circle cx="11" cy="494.5" r="1.6" fill="#2b2b2b"/>
<path d="M19.5 492 h2.5 l3.5 -3 v11 l-3.5 -3 h-2.5z" fill="#c8c8c8"/>
<path d="M27 491 q2 3.5 0 7" fill="none" stroke="#9a9a9a" stroke-width="1.1"/>
<circle cx="37" cy="494.5" r="3" fill="#c8c8c8"/>
<path d="M47.5 493 v-1.5 a2.5 2.5 0 0 1 5 0 v1.5" fill="none" stroke="#d0d0d0" stroke-width="1.5"/>
<rect x="46" y="493" width="8" height="6.5" fill="#d0d0d0"/><rect x="49.3" y="495" width="1.4" height="2.5" fill="#2b2b2b"/>
<g fill="#3a3a3a"><rect x="61" y="487" width="1" height="14"/><rect x="89" y="487" width="1" height="14"/><rect x="117" y="487" width="1" height="14"/><rect x="229" y="487" width="1" height="14"/><rect x="350" y="487" width="1" height="14"/><rect x="452" y="487" width="1" height="14"/></g>
<path d="M73 489 H78 L83.5 494.5 L78.5 499.5 L73 494Z" fill="#c8c8c8"/><circle cx="75.5" cy="491.5" r="1" fill="#2b2b2b"/>
<text x="93" y="498" font-size="8" fill="#6a7a9a" font-family="Liberation Sans">#</text>
<rect x="106" y="497" width="3" height="1" fill="#666"/>
<!-- switches header -->
<g fill="#c8c8c8">
<path d="M236 493 a4.5 4 0 0 1 9 0z"/><rect x="233.5" y="493.8" width="14" height="1.2"/><rect x="236" y="495.8" width="9" height="3.2"/>
</g>
<rect x="240" y="495.8" width="1" height="3.2" fill="#2b2b2b"/>
<circle cx="253.5" cy="494" r="2.3" fill="#c8c8c8"/><g stroke="#c8c8c8" stroke-width="0.9"><path d="M253.5 489 v10 M248.5 494 h10 M250 490.5 l7 7 M257 490.5 l-7 7"/></g>
<path d="M261 489 l10 10" stroke="#c8c8c8" stroke-width="1.2"/>
<text x="273.5" y="499" font-size="11" font-style="italic" fill="#aaa" font-family="Liberation Serif">fx</text>
<rect x="289.5" y="489.5" width="9" height="10" fill="#c8c8c8"/><rect x="291" y="492" width="6" height="2.5" fill="#555"/>
<g fill="none" stroke="#8a8a8a" stroke-width="1.6"><circle cx="303" cy="496" r="2.8"/><circle cx="306" cy="493" r="2.8"/><circle cx="309" cy="490.5" r="2"/></g>
<circle cx="317.5" cy="494.5" r="4.5" fill="#c8c8c8"/><path d="M314.5 497.5 a4.5 4.5 0 0 0 6 -6z" fill="#333"/>
<path d="M327 491.5 l5 -2.5 l5 2.5 v6 l-5 2.5 l-5 -2.5z M327 491.5 l5 2.5 l5 -2.5 M332 494 v6" fill="none" stroke="#c8c8c8" stroke-width="1"/>
<!-- row cells -->
<g fill="#333"><rect x="17" y="503" width="13" height="13"/><rect x="32" y="503" width="11" height="13"/><rect x="45" y="503" width="11" height="13"/></g>
<g fill="#292929"><rect x="17" y="518" width="13" height="13"/><rect x="32" y="518" width="11" height="13"/><rect x="45" y="518" width="11" height="13"/></g>
<g fill="#d0d0d0">
<path d="M6.5 509.5 Q11 504.5 15.5 509.5 Q11 514.5 6.5 509.5Z"/>
<path d="M6.5 524.5 Q11 519.5 15.5 524.5 Q11 529.5 6.5 524.5Z"/>
<path d="M6.5 554.5 Q11 549.5 15.5 554.5 Q11 559.5 6.5 554.5Z"/>
</g>
<g fill="#262626"><circle cx="11" cy="509.5" r="1.6"/><circle cx="11" cy="524.5" r="1.6"/><circle cx="11" cy="554.5" r="1.6"/></g>
<path d="M65.5 506.5 L72 509.5 L65.5 512.5Z" fill="#c8c8c8"/>
<path d="M66 521.5 L71.5 521.5 L68.75 528Z" fill="#c8c8c8"/>
<rect x="76" y="504" width="10" height="12" fill="#6a82ee"/>
<rect x="76" y="519" width="10" height="12" fill="#6a82ee"/>
<path d="M80 536.5 L86 536.5 L83 543Z" fill="#c8c8c8"/>
<path d="M95 551 L101.5 554.5 L95 558Z" fill="#c8c8c8"/>
<path d="M80 566 L87 569.5 L80 573Z" fill="#c8c8c8"/>
<g fill="#d8d8d8">
<path d="M125 504 l1.6 3.4 3.6 0.4 -2.7 2.5 0.8 3.6 -3.3 -1.9 -3.3 1.9 0.8 -3.6 -2.7 -2.5 3.6 -0.4z"/>
<path d="M125 519 l1.6 3.4 3.6 0.4 -2.7 2.5 0.8 3.6 -3.3 -1.9 -3.3 1.9 0.8 -3.6 -2.7 -2.5 3.6 -0.4z"/>
</g>
<!-- row switches -->
<g fill="#c8c8c8">
<path d="M235.5 509 a4.5 4 0 0 1 9 0z"/><rect x="233" y="509.8" width="14" height="1.2"/><rect x="235.5" y="511.8" width="9" height="3.2"/>
<path d="M235.5 524 a4.5 4 0 0 1 9 0z"/><rect x="233" y="524.8" width="14" height="1.2"/><rect x="235.5" y="526.8" width="9" height="3.2"/>
</g>
<rect x="239.5" y="511.8" width="1" height="3.2" fill="#3a3a3a"/><rect x="239.5" y="526.8" width="1" height="3.2" fill="#2e2e2e"/>
<g fill="none" stroke="#6a6a6a" stroke-width="1"><circle cx="253.5" cy="509.5" r="2.3"/><circle cx="253.5" cy="524.5" r="2.3"/><path d="M253.5 505 v2 M253.5 512 v2 M249 509.5 h2 M256 509.5 h2 M253.5 520 v2 M253.5 527 v2 M249 524.5 h2 M256 524.5 h2"/></g>
<rect x="260" y="503" width="12" height="13" fill="#2c2c2c"/><rect x="260" y="518" width="12" height="13" fill="#262626"/>
<path d="M262 514.5 L270 505 M262 529.5 L270 520" stroke="#c8c8c8" stroke-width="1.2"/>
<g fill="#333"><rect x="300" y="503" width="12" height="13"/><rect x="313" y="503" width="12" height="13"/><rect x="326" y="503" width="12" height="13"/></g>
<g fill="#2a2a2a"><rect x="300" y="518" width="12" height="13"/><rect x="313" y="518" width="12" height="13"/><rect x="326" y="518" width="12" height="13"/></g>
<g fill="none" stroke="#9a9a9a" stroke-width="1.1">
<path d="M359.5 506 a5 5 0 1 0 4.5 3 M359.5 508.5 a2.5 2.5 0 1 0 2.2 1.6"/>
<path d="M359.5 521 a5 5 0 1 0 4.5 3 M359.5 523.5 a2.5 2.5 0 1 0 2.2 1.6"/>
</g>
<path d="M438 508 l3.5 3.5 l3.5 -3.5 M438 523 l3.5 3.5 l3.5 -3.5" fill="none" stroke="#bcbcbc" stroke-width="1.3"/>
<circle cx="340.5" cy="539.5" r="4.8" fill="#d8d8d8"/><path d="M339 537 L343 539.5 L339 542Z" fill="#262626"/>
<path d="M337 552 l3 3 l3 -3" fill="none" stroke="#bcbcbc" stroke-width="1.2"/>
<!-- timeline right: handles, playhead, I markers -->
<path d="M467 460 h3.5 a3.5 3.5 0 0 1 3.5 3.5 v0 a3.5 3.5 0 0 1 -3.5 3.5 h-3.5z" fill="#3f8ff0"/>
<path d="M467 486 h2 a3 3 0 0 1 3 3 v6 a3 3 0 0 1 -3 3 h-2z" fill="#3f8ff0"/>
<path d="M467 470 h10 v7 l-5 6 l-5 -6z" fill="#3f8ff0"/>
<g fill="#c8c8c8">
<path d="M469.5 534.5 h6 v1.5 h-2 v6.5 h2 v1.5 h-6 v-1.5 h2 v-6.5 h-2z"/>
<path d="M469.5 549.5 h6 v1.5 h-2 v6.5 h2 v1.5 h-6 v-1.5 h2 v-6.5 h-2z"/>
<path d="M469.5 564.5 h6 v1.5 h-2 v6.5 h2 v1.5 h-6 v-1.5 h2 v-6.5 h-2z"/>
</g>
</svg>
</body></html>
